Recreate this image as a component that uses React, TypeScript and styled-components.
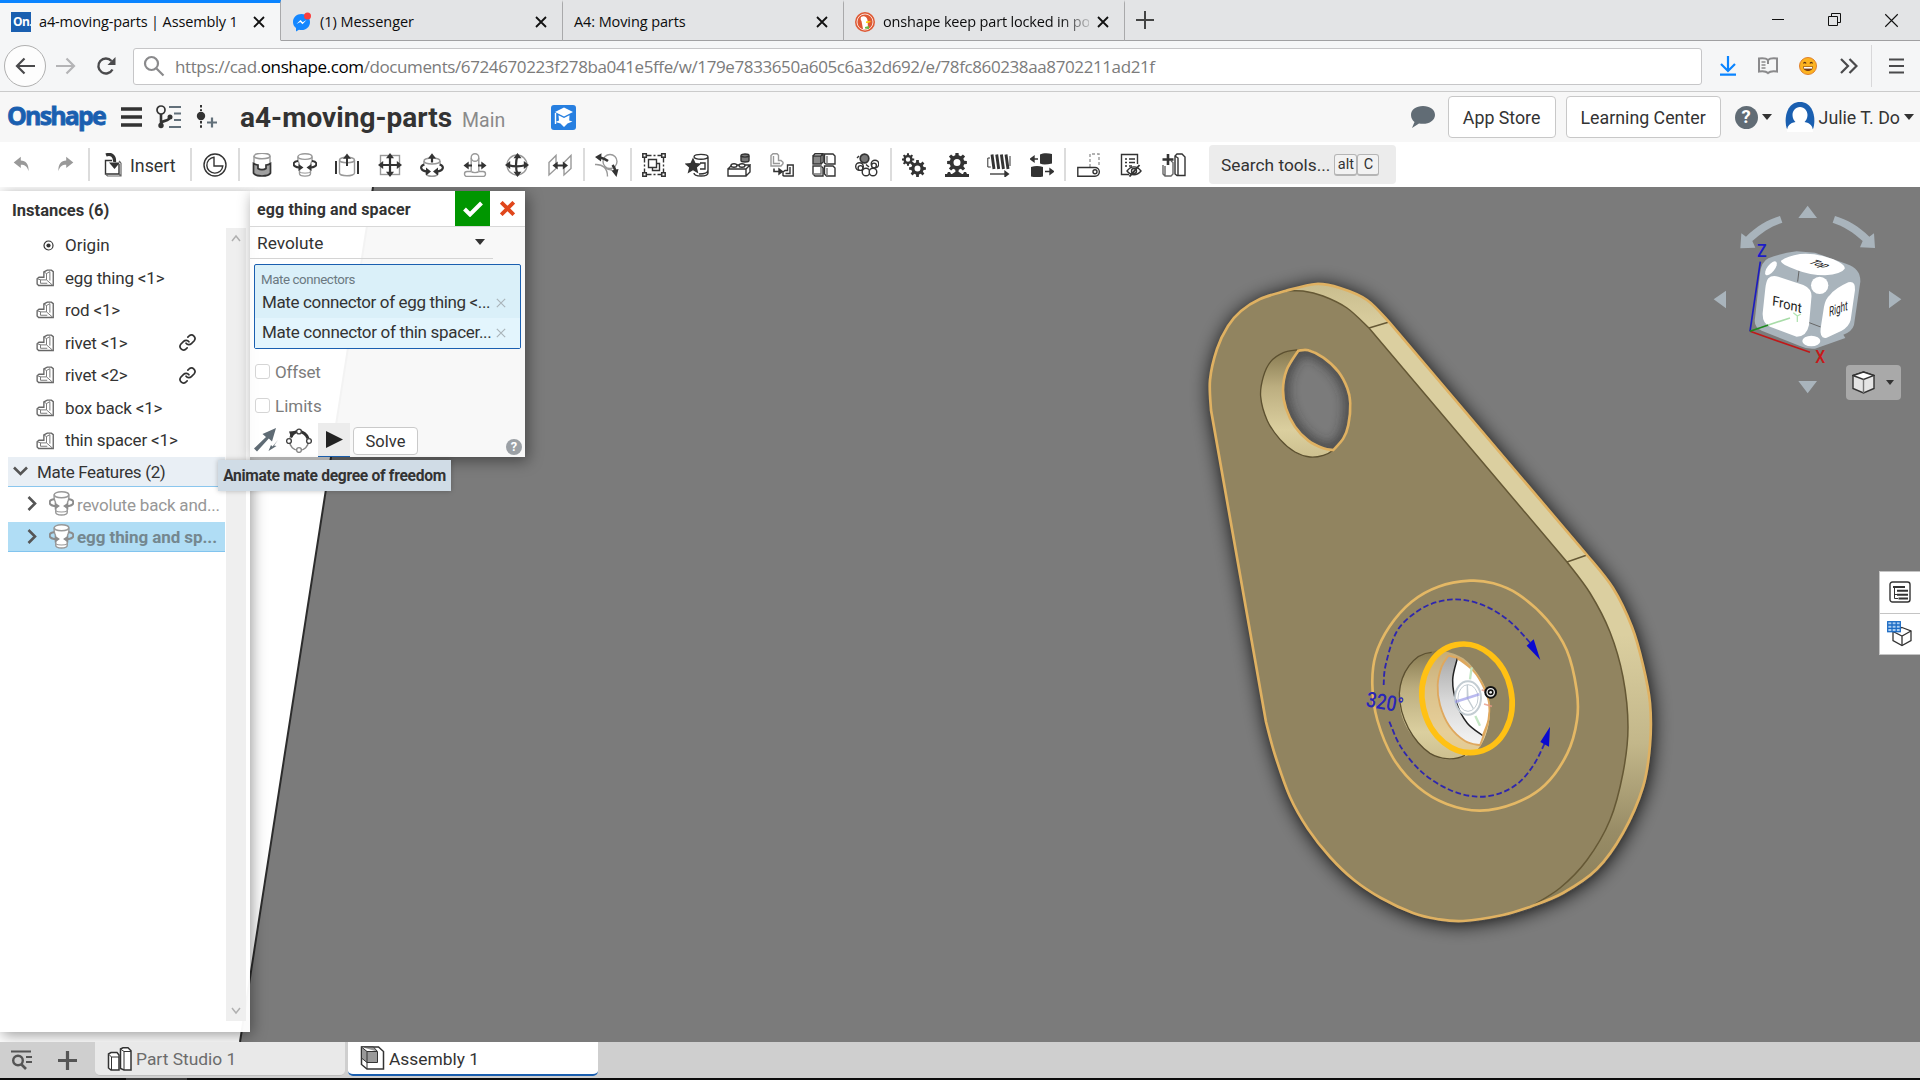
import React from "react";
import styled, { createGlobalStyle } from "styled-components";

const UI = `Roboto, "Liberation Sans", sans-serif`;
const CHROME = `"Open Sans", "Noto Sans", sans-serif`;
const INK = "#333333";
const BLUE = "#1a5fb0";

const Global = createGlobalStyle`
  * { box-sizing: border-box; }
  body { margin: 0; background: #7b7b7b; overflow: hidden; }
`;

const Page = styled.div`
  width: 1920px;
  height: 1080px;
  display: flex;
  flex-direction: column;
  font-family: ${UI};
  color: ${INK};
  overflow: hidden;
`;

const Label = styled.span<{ $size?: number; $ls?: number; $bold?: boolean; $color?: string; $drop?: number }>`
  font-size: ${(p) => p.$size ?? 17}px;
  letter-spacing: ${(p) => p.$ls ?? 0}px;
  font-weight: ${(p) => (p.$bold ? 700 : 400)};
  color: ${(p) => p.$color ?? "inherit"};
  padding-top: ${(p) => (p.$drop ?? 0) * 2}px;
  white-space: nowrap;
  line-height: 1.2;
`;

/* ---------- browser chrome ---------- */

const TabStrip = styled.div`
  height: 41px;
  flex: none;
  display: flex;
  background: #e3e4e6;
  font-family: ${CHROME};
  color: #0c0c0d;
`;

const BrowserTab = styled.div<{ $active?: boolean; $w: number }>`
  width: ${(p) => p.$w}px;
  height: 41px;
  display: flex;
  align-items: center;
  gap: 8px;
  padding: 1px 15px 0 11px;
  border-right: 1px solid #a9a9ab;
  background: ${(p) => (p.$active ? "#f5f6f7" : "transparent")};
  border-top: 3px solid ${(p) => (p.$active ? "#0a84ff" : "transparent")};
  border-bottom: 1px solid ${(p) => (p.$active ? "#f5f6f7" : "#a0a0a2")};
`;

const TabTitle = styled(Label)<{ $fade?: boolean }>`
  flex: 1;
  min-width: 0;
  ${(p) => p.$fade && "mask-image: linear-gradient(to right, #000 86%, transparent 103%);"}
`;

const TabRest = styled.div`
  flex: 1;
  display: flex;
  align-items: center;
  justify-content: space-between;
  padding: 0 21px 0 11px;
  border-bottom: 1px solid #a0a0a2;
`;

const WindowButtons = styled.div`
  display: flex;
  gap: 43px;
`;

const Favicon = styled.div`
  width: 20px;
  height: 20px;
  background: ${BLUE};
  color: #fff;
  font: 700 12px/20px ${CHROME};
  letter-spacing: -0.6px;
  padding-left: 2px;
  overflow: hidden;
`;

const NavBar = styled.div`
  height: 51px;
  flex: none;
  display: flex;
  align-items: center;
  background: #f5f6f7;
  border-bottom: 1px solid #cbcbcb;
  padding: 0 12px 0 4px;
`;

const BackButton = styled.div`
  width: 42px;
  height: 42px;
  border-radius: 50%;
  border: 1px solid #b0b0b0;
  background: #fdfdfd;
  display: grid;
  place-items: center;
`;

const NavIcon = styled.div<{ $w: number }>`
  width: ${(p) => p.$w}px;
  display: grid;
  place-items: center;
`;

const UrlBox = styled.div`
  flex: none;
  width: 1569px;
  height: 37px;
  margin-left: 5px;
  border: 1px solid #c6c6c8;
  border-radius: 3px;
  background: #fff;
  display: flex;
  align-items: center;
  padding-left: 9px;
  gap: 10px;
  font-family: ${CHROME};
  color: #7b7b7b;
  b { font-weight: 400; color: #000; }
`;

const NavRule = styled.div`
  width: 1px;
  height: 42px;
  background: #d8d8da;
`;

/* ---------- document header ---------- */

const Header = styled.div`
  height: 50px;
  flex: none;
  display: flex;
  align-items: center;
  background: #f7f7f7;
  padding-left: 7px;
`;

const Logo = styled.div`
  width: 114px;
  font: 700 25px/30px ${CHROME};
  letter-spacing: -1.85px;
  color: ${BLUE};
  -webkit-text-stroke: 0.8px ${BLUE};
  padding-bottom: 4px;
`;

const HeaderTools = styled.div`
  display: flex;
  align-items: center;
  gap: 14px;
  width: 119px;
`;

const BranchName = styled(Label)`
  margin: 8px 46px 0 10px;
`;

const HeaderRight = styled.div`
  margin-left: auto;
  display: flex;
  align-items: center;
  padding-right: 6px;
`;

const HeaderButton = styled.div<{ $w: number }>`
  width: ${(p) => p.$w}px;
  height: 42px;
  border: 1px solid #c8c8c8;
  border-radius: 4px;
  background: #fff;
  display: grid;
  place-items: center;
  margin-right: 10px;
`;

const Caret = styled.i<{ $s?: number }>`
  display: block;
  border: ${(p) => p.$s ?? 5}px solid transparent;
  border-top: ${(p) => (p.$s ?? 5) + 1}px solid ${INK};
  border-bottom: 0;
`;

const HelpDot = styled.div<{ $d: number; $bg: string }>`
  width: ${(p) => p.$d}px;
  height: ${(p) => p.$d}px;
  border-radius: 50%;
  background: ${(p) => p.$bg};
  color: #fff;
  display: grid;
  place-items: center;
  font: 700 ${(p) => p.$d * 0.8}px/1 ${UI};
`;

/* ---------- toolbar ---------- */

const Toolbar = styled.div`
  height: 45px;
  flex: none;
  display: flex;
  align-items: center;
  background: #fff;
`;

const Tool = styled.div<{ $w?: number }>`
  width: ${(p) => p.$w ?? 42.5}px;
  height: 30px;
  flex: none;
  display: grid;
  place-items: center;
`;

const InsertTool = styled.div`
  width: 100px;
  display: flex;
  align-items: center;
  gap: 7px;
  padding-left: 14px;
`;

const Divider = styled.div`
  width: 2px;
  height: 33px;
  flex: none;
  background: #dcdcdc;
`;

const Gap = styled.div<{ $w: number }>`
  width: ${(p) => p.$w}px;
  flex: none;
`;

const SearchTools = styled.div`
  width: 187px;
  height: 39px;
  margin-left: 12.5px;
  border-radius: 4px;
  background: #ececec;
  display: flex;
  align-items: center;
  padding-left: 12px;
`;

const Key = styled.span<{ $w: number }>`
  width: ${(p) => p.$w}px;
  height: 22px;
  border: 1px solid #b5b5b5;
  border-bottom-width: 2px;
  border-radius: 3px;
  background: #f2f2f2;
  font-size: 14.5px;
  line-height: 19px;
  text-align: center;
`;

/* ---------- stage ---------- */

const Stage = styled.div`
  position: relative;
  height: 855px;
  flex: none;
  display: flex;
  align-items: flex-start;
  padding-top: 4px;
  overflow: hidden;
`;

const Scene = styled.svg`
  position: absolute;
  inset: 0;
  width: 1920px;
  height: 855px;
`;

const Panel = styled.div`
  position: relative;
  width: 250px;
  height: 841px;
  background: rgba(255, 255, 255, 0.97);
  box-shadow: 2px 3px 14px rgba(0, 0, 0, 0.4);
  display: flex;
  flex-direction: column;
`;

const PanelTitle = styled.div`
  height: 37px;
  padding: 10px 0 0 12px;
`;

const PanelBody = styled.div`
  height: 793px;
  display: flex;
`;

const Tree = styled.div`
  width: 226px;
  padding: 1px 1px 0 8px;
`;

const TreeRow = styled.div`
  height: 32.55px;
  display: flex;
  align-items: center;
  padding: 0 29px 0 28px;
`;

const RowIcon = styled.div`
  width: 29px;
  display: flex;
  justify-content: flex-start;
`;

const OriginMark = styled.svg`
  margin-left: 7px;
`;

const Spacer = styled.div`
  flex: 1;
`;

const GroupRow = styled.div`
  height: 30px;
  display: flex;
  align-items: center;
  gap: 9px;
  padding-left: 5px;
  background: #e9eff5;
  border-bottom: 1px solid #8ac6ee;
`;

const MateRow = styled.div<{ $on?: boolean }>`
  height: 30px;
  margin: 2.5px 0 0;
  display: flex;
  align-items: center;
  padding-left: 19px;
  background: ${(p) => (p.$on ? "#b0ddf5" : "transparent")};
  border-bottom: 1px solid ${(p) => (p.$on ? "#82c4ee" : "transparent")};
`;

const Track = styled.div`
  width: 20px;
  background: #efefef;
  display: flex;
  flex-direction: column;
  justify-content: space-between;
  align-items: center;
  padding: 6px 0;
`;

const Dialog = styled.div`
  position: relative;
  width: 275px;
  height: 266px;
  background: rgba(255, 255, 255, 0.945);
  box-shadow: 3px 4px 14px rgba(0, 0, 0, 0.42);
  display: flex;
  flex-direction: column;
`;

const DialogHead = styled.div`
  height: 36px;
  display: flex;
  align-items: center;
  background: #fff;
  border-bottom: 1px solid #d8d8d8;
  padding-left: 7px;
`;

const Accept = styled.div`
  width: 35px;
  height: 35px;
  margin-left: auto;
  background: #009600;
  display: grid;
  place-items: center;
`;

const Reject = styled.div`
  width: 35px;
  display: grid;
  place-items: center;
`;

const SelectRow = styled.div`
  width: 243px;
  height: 32px;
  display: flex;
  align-items: center;
  justify-content: space-between;
  padding: 0 8px 0 7px;
  border-bottom: 1px solid #d4d4d4;
`;

const Connectors = styled.div`
  margin: 5px 4px 0;
  height: 85px;
  border: 1.5px solid ${BLUE};
  border-radius: 2px;
  background: #daf0f9;
  display: flex;
  flex-direction: column;
`;

const ConnectorLabel = styled.div`
  height: 23px;
  padding: 6px 0 0 6px;
  line-height: 1;
`;

const ConnectorRow = styled.div<{ $light?: boolean }>`
  height: 30px;
  display: flex;
  align-items: center;
  justify-content: space-between;
  padding: 0 14px 0 7px;
  background: ${(p) => (p.$light ? "#e3f5fd" : "transparent")};
`;

const CheckRow = styled.div`
  height: 34.5px;
  display: flex;
  align-items: center;
  gap: 5px;
  padding-left: 5px;
  color: #7c7c7c;
`;

const Checkbox = styled.span`
  width: 15px;
  height: 15px;
  border: 1px solid #d5d5d5;
  border-radius: 3px;
  background: #fff;
`;

const ActionRow = styled.div`
  display: flex;
  height: 34px;
  align-items: center;
  padding-left: 4px;
`;

const PlayButton = styled.div`
  width: 32px;
  height: 34px;
  margin-left: 6px;
  background: #ececec;
  border-bottom: 1.5px solid ${BLUE};
  display: grid;
  place-items: center;
`;

const SolveButton = styled.div`
  width: 65px;
  height: 28px;
  margin: 2px 0 0 3px;
  border: 1px solid #cacaca;
  border-radius: 4px;
  background: #fff;
  display: grid;
  place-items: center;
`;

const HelpSlot = styled.div`
  margin: 14px 3px 0 auto;
`;

const Tooltip = styled.div`
  position: absolute;
  left: 218px;
  top: 273px;
  width: 233px;
  height: 31px;
  background: #d0dce6;
  box-shadow: 0 0 5px rgba(0, 0, 0, 0.25);
  display: grid;
  place-items: center;
  padding-top: 2px;
`;

const ViewMenu = styled.div`
  position: absolute;
  left: 1846px;
  top: 178px;
  width: 55px;
  height: 35px;
  border-radius: 4px;
  background: #a9a9a9;
  display: flex;
  align-items: center;
  gap: 11px;
  padding-left: 6px;
`;

const SideTabs = styled.div`
  position: absolute;
  right: 0;
  top: 384px;
  width: 41px;
  height: 84px;
  display: flex;
  flex-direction: column;
  background: #fff;
  border: 1px solid #c4c4c4;
  border-right: 0;
`;

const SideTab = styled.div`
  flex: 1;
  display: grid;
  place-items: center;
  & + & { border-top: 1px solid #c4c4c4; }
`;

/* ---------- bottom tabs ---------- */

const BottomBar = styled.div`
  height: 36px;
  flex: none;
  display: flex;
  background: #cfcfcf;
`;

const BottomTool = styled.div<{ $w: number; $nudge?: number }>`
  width: ${(p) => p.$w}px;
  padding-right: ${(p) => p.$nudge ?? 0}px;
  display: grid;
  place-items: center;
`;

const DocTab = styled.div<{ $on?: boolean }>`
  width: 250px;
  height: 34px;
  margin-right: 3px;
  display: flex;
  align-items: center;
  gap: 4px;
  padding: 0 0 0 12px;
  border-radius: 0 0 5px 5px;
  color: ${(p) => (p.$on ? INK : "#6c6c6c")};
  background: ${(p) => (p.$on ? "#fff" : "#e9e9e9")};
  border-bottom: ${(p) => (p.$on ? `2px solid ${BLUE}` : "1px solid #bdbdbd")};
`;

const Taskbar = styled.div`
  height: 2px;
  flex: none;
  background: linear-gradient(to right, #0c0c0c 126px, #3a3a3a 126px 187px, #0c0c0c 187px);
`;

/* ---------- icons ---------- */

const Ico = ({ s = 24, w = 24, h = 24, children }: { s?: number; w?: number; h?: number; children: React.ReactNode }) => (
  <svg width={(s * w) / 24} height={(s * h) / 24} viewBox={`0 0 ${w} ${h}`} fill="none" stroke={INK} strokeWidth="1.4" display="block">
    {children}
  </svg>
);

const Cross = ({ d = 12, c = "#111", sw = 1.8 }: { d?: number; c?: string; sw?: number }) => (
  <svg width={d} height={d} viewBox="0 0 12 12" fill="none" stroke={c} strokeWidth={sw} display="block">
    <path d="M1 1 11 11M11 1 1 11" />
  </svg>
);

const GRAY = "#999";

const Cylinder = ({ x = 6, y = 1, w = 12, h = 21, c = GRAY }: { x?: number; y?: number; w?: number; h?: number; c?: string }) => (
  <g stroke={c}>
    <ellipse cx={x + w / 2} cy={y + 3} rx={w / 2} ry={2.8} fill="#fff" />
    <path d={`M${x} ${y + 3}V${y + h - 3}a${w / 2} 2.8 0 0 0 ${w} 0V${y + 3}`} />
  </g>
);

const Head = ({ x, y, r = 0 }: { x: number; y: number; r?: number }) => (
  <path d="M0 -4 4 1.200H-4Z" fill={INK} stroke="none" transform={`translate(${x} ${y}) rotate(${r})`} />
);

const gearPath = (cx: number, cy: number, r: number, teeth = 8) => {
  const out: string[] = [];
  for (let i = 0; i < teeth; i++) {
    const a = (i / teeth) * Math.PI * 2;
    const step = (Math.PI * 2) / teeth;
    [
      [-0.3, 0.74],
      [-0.2, 1],
      [0.2, 1],
      [0.3, 0.74],
    ].forEach(([o, k]) => {
      out.push(`${(cx + Math.cos(a + o * step) * r * k).toFixed(2)} ${(cy + Math.sin(a + o * step) * r * k).toFixed(2)}`);
    });
  }
  return `M${out.join("L")}Z`;
};

const Gear = ({ cx, cy, r, t = 8 }: { cx: number; cy: number; r: number; t?: number }) => (
  <path
    d={`${gearPath(cx, cy, r, t)}M${cx + r * 0.35} ${cy}a${r * 0.35} ${r * 0.35} 0 1 0 ${-r * 0.7} 0a${r * 0.35} ${r * 0.35} 0 1 0 ${r * 0.7} 0Z`}
    fill={INK}
    fillRule="evenodd"
    stroke="none"
  />
);

const UndoIcon = ({ flip }: { flip?: boolean }) => (
  <Ico s={17}>
    <path
      transform={flip ? "translate(24 0) scale(-1 1)" : undefined}
      d="M1 9 11 1v5.500c7 0 11.500 5 11 15C20 15 17 12.500 11 12.500V17Z"
      fill="#999"
      stroke="none"
    />
  </Ico>
);

const InsertIcon = () => (
  <Ico w={19} h={24}>
    <path d="M8 7.500H1.500V21H15V11" />
    <path d="M17 10v13H3.500l-2-2M15 21l2 2M15 8l2 2" strokeWidth="1.200" stroke="#666" />
    <path d="M2 2C7 0 11 3 10.500 9" strokeWidth="3.200" />
    <path d="M5 9.500H16L10.500 16Z" fill={INK} stroke="none" />
  </Ico>
);

const MateIcon = () => (
  <Ico>
    <circle cx="12" cy="12" r="11" />
    <path d="M11 4.200A8 8 0 1 0 19.800 13H11Z" />
  </Ico>
);

const FastenedIcon = () => (
  <Ico>
    <Cylinder x={4} y={0} w={16} h={22} />
    <path d="M3.500 10.500c1.500 1 3 1.500 4.500 1.500v3.500c2 1.500 6 1.500 8 0V12c2 0 3-.5 4.500-1.500V20c-2 4-15 4-17 0Z" fill="#a0a0a0" strokeWidth="1.700" />
  </Ico>
);

const RevoluteIcon = ({ c = INK, s = 24 }: { c?: string; s?: number }) => (
  <Ico s={s}>
    <path d="M5 3.400C5 6 4.500 7 5.500 9 6.500 10.500 6.500 12 6.500 14v6.500c0 3.500 11 3.500 11 0V14c0-2 0-3.500 1-5 1-2 .5-3 .5-5.600" stroke={GRAY} fill="#fff" />
    <ellipse cx="12" cy="3.600" rx="7" ry="2.800" stroke={GRAY} fill="#fff" />
    <path d="M5 8C-.5 8.500-1.500 13.500 6 14.500M19 8c5.500.5 6.500 5.500-1 6.500" stroke={c} strokeWidth="2" />
    <path d="M5.500 11 10.500 14.500 5.500 18ZM18.500 11 13.500 14.500 18.500 18Z" fill={c} stroke="none" />
    <path d="M6.500 19c2 1.500 9 1.500 11 0" stroke={GRAY} strokeWidth="1" />
  </Ico>
);

const SliderIcon = () => (
  <Ico>
    <Cylinder x={4.500} y={4} w={15} h={19} />
    <path d="M1 8v13M23 8v13" strokeWidth="2" />
    <path d="M12 4v9" strokeWidth="2" />
    <Head x={12} y={4.500} />
  </Ico>
);

const PlanarIcon = () => (
  <Ico>
    <rect x="2.500" y="2.500" width="19" height="19" stroke={GRAY} />
    <path d="M12 3v18M3 12h18" strokeWidth="2.200" />
    <Head x={12} y={4} />
    <Head x={12} y={20} r={180} />
    <Head x={4} y={12} r={-90} />
    <Head x={20} y={12} r={90} />
  </Ico>
);

const CylindricalIcon = () => (
  <Ico>
    <ellipse cx="12" cy="8" rx="8" ry="3" stroke={GRAY} />
    <path d="M4 8v5M20 8v5M6 17v4c2 3 10 3 12 0v-4" stroke={GRAY} />
    <path d="M4 11.500c-5 2-3 6.500 3 7M20 11.500c5 2 3 6.500-3 7" strokeWidth="2.200" />
    <path d="M6 14.500 11 18.500 6 22.500ZM18 14.500 13 18.500 18 22.500Z" fill={INK} stroke="none" />
    <path d="M12 3v6.500" strokeWidth="2.200" />
    <Head x={12} y={4.300} />
  </Ico>
);

const PinSlotIcon = () => (
  <Ico>
    <g stroke={GRAY}>
      <circle cx="12" cy="4.500" r="3.800" />
      <path d="M8.200 5v13.500M15.800 5v13.500M8 18.500H4a2.400 2.400 0 0 0 0 5h16a2.400 2.400 0 0 0 0-5h-4" />
      <path d="M8.200 18.500c1 1.500 6.600 1.500 7.600 0" />
    </g>
    <path d="M4 12.500h5M15 12.500h5" strokeWidth="2" />
    <Head x={4.500} y={12.500} r={-90} />
    <Head x={19.500} y={12.500} r={90} />
  </Ico>
);

const BallIcon = () => (
  <Ico>
    <circle cx="12" cy="12" r="10" stroke={GRAY} />
    <path d="M12.500 3c-2 5-2 13 0 18M3 12c5 1.500 13 1.500 18 0" strokeWidth="2.200" />
    <Head x={12.500} y={4} />
    <Head x={12.500} y={20} r={180} />
    <Head x={4} y={12} r={-90} />
    <Head x={20} y={12} r={90} />
  </Ico>
);

const ParallelIcon = () => (
  <Ico>
    <path d="M1 9.500 8 2.500v13L1 22ZM16 9.500l7-7v13L16 22Z" stroke={GRAY} />
    <path d="M8 12.500h9" strokeWidth="2" />
    <Head x={8.500} y={12.500} r={-90} />
    <Head x={16} y={12.500} r={90} />
  </Ico>
);

const TangentIcon = () => (
  <Ico>
    <g stroke={GRAY}>
      <circle cx="15" cy="8.500" r="7" />
      <path d="M0 11.500c8-.5 12.500 4 12.500 12" />
      <path d="M8.500 13.500c3 2.500 5 3.500 8.500 3.500" />
    </g>
    <path d="M5 4.500c4 .8 6 2 8 3.500M17.500 12c1.700 2 2.500 4 3 6" strokeWidth="2.600" />
    <path d="M0 4 6.500.300 6 8.500ZM16.500 17.500l7-1.500-2 8Z" fill={INK} stroke="none" />
  </Ico>
);

const GroupIcon = () => (
  <Ico>
    <path d="M5 2.500h14M5 21.500h14M2.500 5v14M21.500 5v14" strokeDasharray="4.500 2 2 2" />
    <path d="M.8.8h3.500v3.500H.8ZM19.700.8h3.500v3.500h-3.500ZM.8 19.700h3.500v3.500H.8ZM19.700 19.700h3.500v3.500h-3.500Z" fill="#fff" strokeWidth="1.500" />
    <path d="M6.500 6.500h8v8h-8ZM10.500 14.500v3h7v-7h-3" />
  </Ico>
);

const FavoriteIcon = () => (
  <Ico>
    <path d="M9 4c0-3.500 14-3.500 14 0v16c0 4-14 4-14 0M9 4c1 3 13 3 14 0M14 21c5 0 9-1 9-4M15 10h5v6h-5" />
    <path d="m8 4.500 2.500 5.500 6 .5-4.600 4 1.500 6-5.400-3.200L2.600 20.500l1.500-6L-.5 10.500l6-.5Z" fill={INK} stroke="none" />
  </Ico>
);

const ReplicateIcon = () => (
  <Ico>
    <path d="M1 16h18v7H1ZM1 16l4-4h18l-4 4M23 12v7l-4 4" />
    <ellipse cx="7" cy="12.500" rx="3" ry="1.800" fill="#fff" />
    <ellipse cx="15" cy="12.500" rx="3" ry="1.800" fill="#fff" />
    <path d="M14 2.500c0-2 8-2 8 0v5c0 2-8 2-8 0Z" fill="#777" />
    <path d="M14 3c1 1.500 7 1.500 8 0" />
  </Ico>
);

const MirrorIcon = () => (
  <Ico>
    <path d="M1 13V2.500L3 .8h4l1.500 1.500V7.500H11l2 1.800v1.500L11 13Z" stroke={GRAY} />
    <path d="M3.500 3v7.500H10" stroke={GRAY} />
    <path d="M13 22.500V19l2-1.500h2.500V12h5.700v11H14ZM15.500 20.500H20V14" />
    <path d="M4 15.500v3h5" strokeWidth="1.600" />
    <Head x={9.500} y={18.500} r={90} />
  </Ico>
);

const PatternIcon = () => (
  <Ico>
    <rect x="1" y="3" width="8" height="8" fill="#888" />
    <path d="M1 3l2-2.200h8V9l-2 2M9 3l2-2.200M12.500 1H21l2 2v8h-9l-1.500-1ZM1 13h8l2 2v8H3l-2-2ZM12.500 13H21l2 2v8h-8.500l-2-2Z" />
    <path d="M15 3v8M15 15v8M9 13v8H1" stroke="#777" />
  </Ico>
);

const CircularPatternIcon = () => (
  <Ico>
    <circle cx="9.500" cy="5.500" r="4.300" fill="#777" strokeWidth="1.700" />
    <g fill="#fff">
      <circle cx="4.500" cy="13.500" r="3.800" />
      <circle cx="20" cy="11" r="3.800" />
      <circle cx="11" cy="19" r="3.800" />
      <circle cx="18" cy="19" r="3.800" />
      <circle cx="5.500" cy="15" r="2.400" />
      <circle cx="19" cy="12.500" r="2.400" />
    </g>
    <path d="M11 11.500l3 2.500M2 5l2-2" />
  </Ico>
);

const GearsIcon = () => (
  <Ico>
    <Gear cx={6} cy={6.500} r={6.300} />
    <Gear cx={15.500} cy={15.500} r={8.500} />
  </Ico>
);

const RackIcon = () => (
  <Ico>
    <Gear cx={12} cy={9.500} r={10} />
    <path d="M0 24v-3h2l1-2h2l1 2h1l3-2h4l3 2h1l1-2h2l1 2h2v3Z" fill={INK} stroke="none" />
  </Ico>
);

const ScrewIcon = () => (
  <Ico>
    <path d="M5 1.500 7 16M9.700 1.500 11.700 16M14.400 1.500 16.400 16M19 1.500 21 16" strokeWidth="2.900" />
    <path d="M3 5H.8v9h3M23 3v10" strokeWidth="1" />
    <path d="M3 21h15" strokeWidth="1.300" />
    <Head x={18.500} y={21} r={90} />
  </Ico>
);

const LinearRelIcon = () => (
  <Ico>
    <path d="M10 1.500c3-1.500 8-1.500 12-.5v9.500c-5 1-9 1.500-12 0ZM1 14c4-1.500 8-1.500 12 0v9.500c-4 1-8 1-12 0Z" fill={INK} stroke="none" />
    <path d="M3 6h5M15 18.500h5" />
    <Head x={3.500} y={6} r={-90} />
    <Head x={20.500} y={18.500} r={90} />
  </Ico>
);

const PositionIcon = () => (
  <Ico>
    <path d="M13 14V1h9v13" stroke={GRAY} strokeDasharray="3 2" />
    <path d="M.8 14.500H18a4.300 4.300 0 0 1 0 8.700H.8Z" />
    <circle cx="18" cy="18.800" r="2" />
  </Ico>
);

const DisplayIcon = () => (
  <Ico>
    <path d="M10 21.500H2.500V1.500h16V11M6 6h2M10 6h6M6 9.500h2M10 9.500h6M6 13h2M10 13h3" />
    <path d="M8 18c4-5.500 10-5.500 14 0-4 5-10 5-14 0Z" fill="#fff" />
    <circle cx="15" cy="18" r="2.500" />
    <path d="M20.500 12 10.500 23.500" strokeWidth="1.900" />
  </Ico>
);

const ExplodeIcon = () => (
  <Ico>
    <path d="M1 12v9l2 2h6l2-2V9.500L9 8M3 13v10" stroke="#666" />
    <path d="M13 3l2-2h5l3 3v18.500h-8L13 21ZM13 3l3 2v17" />
    <path d="M6 1v11M.5 6.500h11" strokeWidth="2.600" />
  </Ico>
);

const PartIcon = () => (
  <Ico s={18}>
    <path d="M1.500 13 4 11h6.500V4L15 1.500h5.500l2.500 2v18.500H3.500l-2-2Z" stroke="#666" strokeWidth="1.800" />
    <path d="M10.500 4l3.500 2 4.500-2.500M14 6v8.500H6.500L1.500 13M14 14.500l8 7M18.500 3.500V15.500M6 14.500v4.500h9" stroke="#777" strokeWidth="1.300" />
  </Ico>
);

const OriginIcon = () => (
  <OriginMark width="11" height="11" viewBox="0 0 11 11">
    <circle cx="5.500" cy="5.500" r="4.500" fill="none" stroke={INK} strokeWidth="1.200" />
    <circle cx="5.500" cy="5.500" r="2.100" fill={INK} />
  </OriginMark>
);

const LinkIcon = () => (
  <svg width="17" height="17" viewBox="0 0 24 24" fill="none" stroke={INK} strokeWidth="2.400" strokeLinecap="round">
    <path d="M10 13a5 5 0 0 0 7.500.5l4-4a5 5 0 0 0-7-7l-2 2" />
    <path d="M14 11a5 5 0 0 0-7.500-.5l-4 4a5 5 0 0 0 7 7l2-2" />
  </svg>
);

const Chevron = ({ dir }: { dir: "down" | "right" }) => (
  <svg width={dir === "down" ? 15 : 10} height={dir === "down" ? 10 : 15} viewBox={dir === "down" ? "0 0 15 10" : "0 0 10 15"} fill="none" stroke="#555" strokeWidth="2.600">
    <path d={dir === "down" ? "M1 1.500 7.500 8 14 1.500" : "M1.500 1 8 7.500 1.500 14"} />
  </svg>
);

const ScrollArrow = ({ up }: { up?: boolean }) => (
  <svg width="10" height="8" viewBox="0 0 10 8" fill="none" stroke="#b0b0b0" strokeWidth="1.500">
    <path d={up ? "M1 7 5 2l4 5" : "M1 1l4 5 4-5"} />
  </svg>
);

/* ---------- 3D scene ---------- */

type P = [number, number];

/* Smooth curve through the points, as cubic segments without the initial move. */
const curve = (p: P[]) =>
  p
    .slice(1)
    .map((b, i) => {
      const a = p[i];
      const before = p[i - 1] ?? a;
      const after = p[i + 2] ?? b;
      return `C${a[0] + (b[0] - before[0]) / 6} ${a[1] + (b[1] - before[1]) / 6} ${b[0] - (after[0] - a[0]) / 6} ${b[1] - (after[1] - a[1]) / 6} ${b[0]} ${b[1]}`;
    })
    .join("");

const line = (p: P[]) => `M${p[0].join(" ")}${curve(p)}`;

const ring = (p: P[]) => {
  const n = p.length;
  const loop = [p[n - 1], ...p, p[0], p[1]];
  let d = `M${p[0].join(" ")}`;
  for (let i = 1; i <= n; i++) {
    const [o, a, b, c] = [loop[i - 1], loop[i], loop[i + 1], loop[i + 2] ?? p[1]];
    d += `C${a[0] + (b[0] - o[0]) / 6} ${a[1] + (b[1] - o[1]) / 6} ${b[0] - (c[0] - a[0]) / 6} ${b[1] - (c[1] - a[1]) / 6} ${b[0]} ${b[1]}`;
  }
  return d + "Z";
};

const leftArc: P[] = [[1211, 410], [1210, 380], [1217, 349], [1228, 326], [1241, 311], [1260, 299], [1285, 291]];
const lowerArc: P[] = [[1266, 722], [1275, 755], [1290, 797], [1308, 829], [1330, 857], [1354, 880], [1381, 898], [1413, 913], [1437, 919], [1463, 921], [1503, 915], [1530, 907]];
const outerRight: P[] = [[1530, 907], [1563, 893], [1597, 869], [1623, 833], [1643, 787], [1650, 745], [1650, 703], [1643, 665], [1632, 627], [1613, 588], [1587, 555]];
const outerTop: P[] = [[1389, 322], [1367, 300], [1340, 288], [1316, 284], [1285, 291]];
const innerRight: P[] = [[1530, 907], [1560, 888], [1587, 860], [1610, 820], [1623, 773], [1628, 727], [1623, 677], [1610, 632], [1590, 593], [1567, 562]];
const innerTop: P[] = [[1369, 328], [1347, 308], [1323, 296], [1303, 291], [1285, 291]];

const leftBase = `${line(leftArc.slice().reverse())}L1266 722${curve(lowerArc)}`;
const silhouette = `${leftBase}${curve(outerRight)}L1389 322${curve(outerTop)}Z`;
const face = `${leftBase}${curve(innerRight)}L1369 328${curve(innerTop)}Z`;
const faceEdge = `${line(innerRight)}L1369 328${curve(innerTop)}`;

/* Hole outlines are kept at three times the scene scale. */
const topRim = ring([[350, 270], [385, 270], [430, 293], [475, 335], [502, 385], [512, 430], [505, 495], [490, 535], [460, 570], [430, 586], [390, 591], [345, 576], [300, 538], [262, 482], [242, 410], [250, 350], [272, 305], [310, 278]]);
const topOpening = `${line([[355, 272], [385, 271], [430, 293], [475, 335], [502, 385], [511, 430], [505, 495], [490, 535], [460, 570]])}${curve([[460, 570], [430, 565], [385, 542], [345, 500], [318, 445], [309, 390], [320, 330], [355, 272]])}Z`;

const lowRim = ring([[340, 273], [400, 295], [445, 345], [472, 400], [480, 460], [465, 530], [430, 578], [355, 598], [300, 580], [245, 525], [215, 465], [208, 400], [225, 340], [260, 297], [300, 276]]);
const lowOpening = `${line([[355, 287], [395, 300], [440, 345], [465, 390], [477, 440], [473, 490], [450, 556]])}${curve([[450, 556], [405, 543], [358, 498], [330, 435], [323, 375], [335, 320], [355, 287]])}Z`;
const whiteBeyond = `${line([[382, 295], [430, 333], [460, 380], [476, 430], [474, 480], [458, 527]])}${curve([[458, 527], [412, 490], [380, 430], [368, 360], [382, 295]])}Z`;
const bigCircle = ring([[420, 62], [325, 80], [245, 125], [178, 200], [137, 285], [127, 375], [142, 480], [190, 595], [265, 682], [350, 732], [450, 752], [555, 730], [645, 675], [712, 580], [741, 480], [740, 390], [710, 270], [650, 178], [565, 103], [490, 70]]);

const ViewCube = () => (
  <g transform="translate(1700 190) scale(.33333)">
    <g fill="#a9b4bc">
      <path d="M323 47 351 84H295ZM323 610 295 573H351ZM41 328 78 302V355ZM604 328 567 302V355Z" />
      <path d="M240 78 247 98C215 108 185 127 157 153L166 173 121 175 124 130 138 140C168 110 205 88 240 78Z" />
      <path d="M405 78 398 98C430 108 460 127 488 153L480 172 525 174 522 130 508 140C478 110 440 88 405 78Z" />
      <path d="M205 205Q240 190 290 184L345 188 440 222Q482 235 481 275L462 405Q456 425 430 434L436 444 345 476Q320 478 300 468L185 422Q160 410 165 385L180 250Q184 215 205 205Z" />
    </g>
    <path d="M297 242 293 275M325 397 362 411" stroke="#666" strokeWidth="3" />
    <g fill="#fff">
      <path d="M243 212Q262 198 300 192 350 188 400 208 438 225 434 236 425 252 375 256 330 256 290 240 240 222 243 212Z" />
      <path d="M205 265Q215 255 235 260L310 285Q338 297 334 325L327 405Q320 440 290 440L210 410Q187 400 188 370L196 295Q198 275 205 265Z" />
      <path d="M390 315Q405 295 445 277 467 272 465 300L452 390Q447 410 425 422L380 443Q358 448 362 415L372 350Q377 325 390 315Z" />
      <circle cx="359" cy="286" r="26" />
      <ellipse cx="334" cy="453" rx="27" ry="16" />
      <ellipse cx="213" cy="235" rx="11" ry="25" transform="rotate(38 213 235)" />
    </g>
    <g fontFamily={UI} fill="#222">
      <text transform="matrix(1 .26 -.08 1.050 216 346)" fontSize="39" textLength="88" lengthAdjust="spacingAndGlyphs">Front</text>
      <text transform="matrix(1 -.36 -.02 1.250 387 380)" fontSize="33" textLength="56" lengthAdjust="spacingAndGlyphs">Right</text>
      <text transform="matrix(1 .3 -1.100 .4 322 219)" fontSize="34" textLength="50" lengthAdjust="spacingAndGlyphs" fontWeight="500">Top</text>
    </g>
    <g strokeWidth="5" fill="none">
      <path d="M150 424 181 215" stroke="#1c1cc0" />
      <path d="M150 424 330 487" stroke="#c01818" />
      <path d="M150 424 205 405" stroke="#1d8a1d" />
      <path d="M205 405 270 384" stroke="#a8dca8" />
      <path d="M280 368 292 378 303 372M292 378V396" stroke="#b4e4b4" strokeWidth="4" />
    </g>
    <g fontFamily={UI} fontSize="54" fontWeight="500">
      <text x="171" y="200" fill="#1c1cc8" textLength="29" lengthAdjust="spacingAndGlyphs">Z</text>
      <text x="346" y="518" fill="#c81818" textLength="30" lengthAdjust="spacingAndGlyphs">X</text>
    </g>
  </g>
);

const SceneView = () => (
  <Scene viewBox="0 187 1920 855">
    <defs>
      <filter id="soft" x="-20%" y="-20%" width="140%" height="140%">
        <feGaussianBlur stdDeviation="10" />
      </filter>
      <filter id="rim" x="-20%" y="-20%" width="140%" height="140%">
        <feGaussianBlur stdDeviation="18" />
      </filter>
      <linearGradient id="side" x1="0" y1="0" x2="0" y2="1">
        <stop offset="0" stopColor="#c9bd8e" />
        <stop offset=".07" stopColor="#dbcfa0" />
        <stop offset=".55" stopColor="#dbcfa0" />
        <stop offset=".72" stopColor="#c3b78a" />
        <stop offset=".86" stopColor="#988c66" />
        <stop offset="1" stopColor="#857a56" />
      </linearGradient>
      <linearGradient id="wall" x1="0" y1="0" x2="0" y2="1">
        <stop offset="0" stopColor="#85784f" />
        <stop offset=".35" stopColor="#bcae80" />
        <stop offset=".75" stopColor="#dbcf9f" />
        <stop offset="1" stopColor="#cdc08f" />
      </linearGradient>
      <linearGradient id="steel" x1="0" y1="0" x2="0" y2="1">
        <stop offset="0" stopColor="#a8a8a8" />
        <stop offset=".5" stopColor="#d8d8d8" />
        <stop offset="1" stopColor="#f4f4f4" />
      </linearGradient>
      <clipPath id="openTop"><path d={topOpening} /></clipPath>
      <clipPath id="holeLow"><path d={lowRim} /></clipPath>
    </defs>
    <rect y="187" width="1920" height="855" fill="#7b7b7b" />
    <path d="M0 187H373L240 1042H0Z" fill="#fff" />
    <path d="M373 187 240 1042" stroke="#2c2c2c" strokeWidth="2" />

    <path d={silhouette} fill="#111" filter="url(#soft)" transform="translate(1 2)" />
    <path d={silhouette} fill="url(#side)" />
    <path d={face} fill="#918460" />
    <path d={faceEdge} fill="none" stroke="#655835" strokeWidth="1.500" />
    <path d="M1369 328 1389 322M1567 562 1587 555" stroke="#655835" strokeWidth="1.400" />
    <path d={silhouette} fill="none" stroke="#dfb162" strokeWidth="2.700" />

    <g transform="translate(1180 260) scale(.33333)" fill="none">
      <path d={topRim} fill="url(#wall)" stroke="#5c5030" strokeWidth="4" />
      <path d={topOpening} fill="#7b7b7b" />
      <g clipPath="url(#openTop)">
        <path d={topOpening} stroke="#2a2a2a" strokeWidth="30" filter="url(#rim)" opacity=".75" />
      </g>
      <path d={topOpening} stroke="#dfb162" strokeWidth="8" />
    </g>

    <g transform="translate(1330 560) scale(.33333)" fill="none">
      <path d={bigCircle} stroke="#e4b865" strokeWidth="8" />
      <path d={lowRim} fill="url(#wall)" />
      <g clipPath="url(#holeLow)">
        <ellipse cx="410" cy="414" rx="130" ry="160" transform="rotate(-13 410 414)" fill="#efcf95" opacity=".6" />
      </g>
      <path d="M405 586C370 603 330 598 300 580C250 545 208 475 208 400C212 340 250 280 305 277" stroke="#5c5030" strokeWidth="4" />
      <path d={lowOpening} fill="url(#steel)" stroke="#dfa85e" strokeWidth="5.500" />
      <path d={whiteBeyond} fill="#fff" />
      <path d={line([[382, 295], [368, 360], [380, 430], [412, 490], [458, 527]])} stroke="#222" strokeWidth="4.500" />
      <path d={line([[382, 295], [430, 333], [460, 380], [477, 430], [475, 480], [458, 527]])} stroke="#dfa85e" strokeWidth="5" />
      <g stroke="#c3ccd2" strokeWidth="6">
        <ellipse cx="414" cy="414" rx="39" ry="50" />
        <ellipse cx="414" cy="414" rx="30" ry="40" strokeWidth="3" />
        <path d="M412 378v36l18 32M414 414l-2-40" strokeWidth="4" />
      </g>
      <path d="M375 426 448 403" stroke="#9d9de8" strokeWidth="8" opacity=".7" />
      <path d="M425 322 420 358M436 468 450 497" stroke="#c4e6c4" strokeWidth="7" />
      <path d="M455 389 466 394M462 432 486 439" stroke="#e79a86" strokeWidth="5" opacity=".8" />
      <ellipse cx="411" cy="415" rx="134" ry="164" transform="rotate(-12 411 415)" stroke="#ffc114" strokeWidth="17" />
      <circle cx="482" cy="397" r="19" fill="#111" />
      <circle cx="482" cy="397" r="11" stroke="#eee" strokeWidth="4" />
      <circle cx="482" cy="397" r="4" fill="#eee" />
      <g stroke="#2e26ae" strokeWidth="5.500">
        <path strokeDasharray="17 8" d={line([[161, 375], [167, 315], [200, 215], [260, 155], [325, 125], [395, 119], [470, 140], [540, 185], [602, 250]])} />
        <path strokeDasharray="17 8" d={line([[178, 485], [215, 565], [280, 640], [360, 690], [440, 710], [510, 700], [570, 665], [615, 608], [646, 545]])} />
      </g>
      <path d="M590 257 611 238 631 300ZM631 546 657 560 660 500Z" fill="#0a0ad0" />
      <text transform="translate(106 439) rotate(10)" fontFamily={UI} fontSize="64" fontWeight="500" fill="#2a26b8" textLength="112" lengthAdjust="spacingAndGlyphs">320°</text>
    </g>
    <ViewCube />
  </Scene>
);

/* ---------- data ---------- */

const toolGroups: React.ComponentType[][] = [
  [MateIcon],
  [FastenedIcon, RevoluteIcon, SliderIcon, PlanarIcon, CylindricalIcon, PinSlotIcon, BallIcon, ParallelIcon],
  [TangentIcon],
  [GroupIcon, FavoriteIcon, ReplicateIcon, MirrorIcon, PatternIcon, CircularPatternIcon],
  [GearsIcon, RackIcon, ScrewIcon, LinearRelIcon],
  [PositionIcon, DisplayIcon, ExplodeIcon],
];

const instances = [
  { name: "egg thing <1>" },
  { name: "rod <1>" },
  { name: "rivet <1>", linked: true },
  { name: "rivet <2>", linked: true },
  { name: "box back <1>" },
  { name: "thin spacer <1>" },
];

export default function App() {
  return (
    <Page>
      <Global />
      <TabStrip>
        <BrowserTab $active $w={281}>
          <Favicon>On.</Favicon>
          <TabTitle $size={14.5} $ls={-0.13}>a4-moving-parts | Assembly 1</TabTitle>
          <Cross />
        </BrowserTab>
        <BrowserTab $w={282}>
          <svg width="20" height="20" viewBox="0 0 20 20">
            <path d="M9.500 2C4.500 2 1 5.500 1 10c0 2.500 1 4.500 3 6v3.500l3-1.700c6 1.400 11-2.300 11-7.800C18 5.500 14.500 2 9.500 2Z" fill="#1487ff" />
            <path d="m4.500 12 4-4 2.200 2.200L14.500 8l-4 4.200L8.300 10Z" fill="#fff" />
            <circle cx="15.500" cy="4" r="3.500" fill="#fa3e3e" />
          </svg>
          <TabTitle $size={14.5} $ls={-0.05}>(1) Messenger</TabTitle>
          <Cross />
        </BrowserTab>
        <BrowserTab $w={281}>
          <TabTitle $size={14.5} $ls={-0.1}>A4: Moving parts</TabTitle>
          <Cross />
        </BrowserTab>
        <BrowserTab $w={281}>
          <svg width="20" height="20" viewBox="0 0 20 20">
            <circle cx="10" cy="10" r="10" fill="#de5833" />
            <circle cx="10" cy="10" r="8" fill="none" stroke="#fff" strokeWidth=".8" />
            <path d="M6 5c3-2 6 0 6.500 3l.5 8c-2 1.500-4 1.500-5 1L6.500 9C5.500 8 5.500 6.500 6 5Z" fill="#fff" />
            <path d="M11 9.500c2-.8 4-.6 5 0-1 1-3 1.600-5 1.500Z" fill="#fdd20a" />
            <path d="m10 15 4-1v3l-4-.5Z" fill="#65bc46" />
          </svg>
          <TabTitle $size={14.5} $ls={-0.17} $fade>onshape keep part locked in po</TabTitle>
          <Cross />
        </BrowserTab>
        <TabRest>
          <svg width="18" height="18" viewBox="0 0 18 18" stroke="#444" strokeWidth="2"><path d="M9 0v18M0 9h18" /></svg>
          <WindowButtons>
            <svg width="14" height="14" viewBox="0 0 14 14" stroke="#111"><path d="M1 6.500h12" /></svg>
            <svg width="13" height="13" viewBox="0 0 13 13" stroke="#111" fill="none"><path d="M.5 3.500h9v9h-9ZM3.500 3.500v-3h9v9h-3" /></svg>
            <Cross d={15} sw={0.9} />
          </WindowButtons>
        </TabRest>
      </TabStrip>

      <NavBar>
        <BackButton>
          <svg width="20" height="18" viewBox="0 0 20 18" fill="none" stroke="#4a4a4c" strokeWidth="2.200"><path d="M20 9H2M9.500 1.500 2 9l7.500 7.500" /></svg>
        </BackButton>
        <NavIcon $w={40}>
          <svg width="20" height="18" viewBox="0 0 20 18" fill="none" stroke="#b4b4b6" strokeWidth="2.200"><path d="M0 9h18M10.500 1.500 18 9l-7.500 7.500" /></svg>
        </NavIcon>
        <NavIcon $w={40}>
          <svg width="20" height="20" viewBox="0 0 20 20" fill="none" stroke="#4a4a4c" strokeWidth="2.400">
            <path d="M16.500 13.500A7.500 7.500 0 1 1 15.500 5" />
            <path d="M19.500 1v8h-8Z" fill="#4a4a4c" stroke="none" />
          </svg>
        </NavIcon>
        <Gap $w={2} />
        <UrlBox>
          <svg width="22" height="22" viewBox="0 0 22 22" fill="none" stroke="#8a8a8c" strokeWidth="2.200"><circle cx="8.500" cy="8.500" r="6.500" /><path d="m13.500 13.500 7 7" /></svg>
          <Label $size={17} $ls={-0.39} $drop={1.5}>
            https://cad.<b>onshape.com</b>/documents/6724670223f278ba041e5ffe/w/179e7833650a605c6a32d692/e/78fc860238aa8702211ad21f
          </Label>
        </UrlBox>
        <NavIcon $w={52}>
          <svg width="16" height="20" viewBox="0 0 16 20" fill="none" stroke="#0a84ff" strokeWidth="2.200"><path d="M8 0v14M1 8l7 7 7-7M0 18.700h16" /></svg>
        </NavIcon>
        <NavIcon $w={28}>
          <svg width="20" height="18" viewBox="0 0 20 18" fill="none" stroke="#8a8a8c" strokeWidth="2">
            <path d="M10 3C8 1 5 1 1 1.500v13c3-.5 7-.5 9 1.500 2-2 6-2 9-1.500v-13C15 1 12 1 10 3ZM10 3v4" />
            <path d="M3.500 5h4M3.500 8h4M3.500 11h4" strokeWidth="1.500" />
          </svg>
        </NavIcon>
        <NavIcon $w={52}>
          <svg width="18" height="18" viewBox="0 0 18 18">
            <circle cx="9" cy="9" r="8.500" fill="#fcb320" stroke="#e0802a" />
            <path d="M4 9.500h10c0 6-10 6-10 0Z" fill="#7a3d10" />
            <path d="M4.800 10h8.400v1.600H4.800Z" fill="#fff" />
            <path d="M4.500 6.500c.5-1.500 2-1.500 2.500 0M11 6.500c.5-1.500 2-1.500 2.500 0" stroke="#5a3010" fill="none" strokeWidth="1.200" />
          </svg>
        </NavIcon>
        <NavIcon $w={30}>
          <svg width="18" height="16" viewBox="0 0 18 16" fill="none" stroke="#4a4a4c" strokeWidth="2.200"><path d="m1 1 7 7-7 7M9.500 1l7 7-7 7" /></svg>
        </NavIcon>
        <Gap $w={7} />
        <NavRule />
        <Spacer />
        <NavIcon $w={15}>
          <svg width="15" height="16" viewBox="0 0 15 16" stroke="#4a4a4c" strokeWidth="2"><path d="M0 1.500h15M0 8h15M0 14.500h15" /></svg>
        </NavIcon>
        <Gap $w={4} />
      </NavBar>

      <Header>
        <Logo>Onshape</Logo>
        <HeaderTools>
          <svg width="21" height="20" viewBox="0 0 21 20" stroke={INK} strokeWidth="3.600"><path d="M0 2h21M0 10h21M0 18h21" /></svg>
          <svg width="26" height="24" viewBox="0 0 26 24" fill="none" stroke={INK} strokeWidth="2">
            <circle cx="5" cy="5" r="4" strokeWidth="1.700" />
            <path d="M5 9v10M5 19c0-5 9-1 9-8" strokeWidth="2.600" />
            <circle cx="5" cy="20.500" r="2.700" fill={INK} stroke="none" />
            <circle cx="14" cy="12" r="2.500" fill={INK} stroke="none" />
            <path d="M13 2h12M18 8.500h7M18 15h7M13 22h12" stroke="#62707a" />
          </svg>
          <svg width="22" height="24" viewBox="0 0 22 24" fill="none" stroke={INK} strokeWidth="2">
            <circle cx="5" cy="11" r="4.200" fill={INK} stroke="none" />
            <path d="M5 0v6M5 16v8" strokeDasharray="2.500 1.700" />
            <path d="M16 12.500v10M11 17.500h10" stroke="#62707a" strokeWidth="2.200" />
          </svg>
        </HeaderTools>
        <Label $size={28} $bold $ls={0.02} $drop={1}>a4-moving-parts</Label>
        <BranchName $size={19.5} $color="#8a8a8a">Main</BranchName>
        <svg width="25" height="25" viewBox="0 0 25 25">
          <rect width="25" height="25" rx="3" fill="#277fe0" />
          <path d="M13 2.500 22 7l-9 4.500L4 7Z" fill="#fff" />
          <path d="M7.500 10.300 13 13l5.500-2.700-.3 5.200 3.300 1-5 2-3.500 3.500-3.500-3.500-5-1.500 3.500-1.500Z" fill="#fff" />
          <path d="M4.500 8v11" stroke="#fff" strokeWidth="1.400" />
        </svg>
        <HeaderRight>
          <svg width="26" height="24" viewBox="0 0 26 24">
            <path d="M13 1C6 1 1 4.500 1 10c0 3 1.500 5.500 3.500 7L2 23l7-4.500C18 20 25 16 25 10 25 4.500 20 1 13 1Z" fill="#616c75" />
          </svg>
          <Gap $w={12} />
          <HeaderButton $w={108}><Label $size={17.8} $drop={0.5}>App Store</Label></HeaderButton>
          <HeaderButton $w={155}><Label $size={17.8} $drop={0.5}>Learning Center</Label></HeaderButton>
          <Gap $w={4} />
          <HelpDot $d={23} $bg="#616c75">?</HelpDot>
          <Gap $w={4} />
          <Caret />
          <Gap $w={13} />
          <svg width="30" height="30" viewBox="0 0 30 30">
            <path d="M2 27C-1 20 0 0 15 0s16 20 13 27l-6 2H8Z" fill={BLUE} />
            <path d="M15 5c-4.500 0-7.500 4-7.500 8 0 3.500 1.500 5.500 3 7C5 21 2 23.500 2 30h26c0-6.500-3-9-8.500-10 1.500-1.500 3-3.500 3-7 0-4-3-8-7.500-8Z" fill="#fff" />
          </svg>
          <Gap $w={4} />
          <Label $size={17.8} $drop={0.5}>Julie T. Do</Label>
          <Gap $w={4} />
          <Caret />
        </HeaderRight>
      </Header>

      <Toolbar>
        <Tool $w={43.5}><UndoIcon /></Tool>
        <Tool $w={44.5}><UndoIcon flip /></Tool>
        <Divider />
        <InsertTool>
          <InsertIcon />
          <Label $size={17.8} $drop={1}>Insert</Label>
        </InsertTool>
        {toolGroups.map((group, i) => (
          <React.Fragment key={i}>
            <Divider />
            <Gap $w={i === 0 ? 2 : 1.1} />
            {group.map((Icon, k) => (
              <Tool key={k}><Icon /></Tool>
            ))}
            <Gap $w={1.6} />
          </React.Fragment>
        ))}
        <SearchTools>
          <Label $size={17.3} $drop={0.5}>Search tools...</Label>
          <Gap $w={4} />
          <Key $w={23}>alt</Key>
          <Key $w={22}>C</Key>
        </SearchTools>
      </Toolbar>

      <Stage>
        <SceneView />
        <Panel>
          <PanelTitle><Label $size={16.5} $bold>Instances (6)</Label></PanelTitle>
          <PanelBody>
            <Tree>
              <TreeRow>
                <RowIcon><OriginIcon /></RowIcon>
                <Label>Origin</Label>
              </TreeRow>
              {instances.map((it) => (
                <TreeRow key={it.name}>
                  <RowIcon><PartIcon /></RowIcon>
                  <Label $ls={-0.17}>{it.name}</Label>
                  <Spacer />
                  {it.linked && <LinkIcon />}
                </TreeRow>
              ))}
              <GroupRow>
                <Chevron dir="down" />
                <Label $ls={-0.34} $drop={1}>Mate Features (2)</Label>
              </GroupRow>
              <MateRow>
                <Chevron dir="right" />
                <Gap $w={12} />
                <RevoluteIcon c="#8c8c8c" s={25} />
                <Gap $w={3} />
                <Label $color="#979797" $ls={-0.2} $drop={1}>revolute back and...</Label>
              </MateRow>
              <MateRow $on>
                <Chevron dir="right" />
                <Gap $w={12} />
                <RevoluteIcon c="#8c8c8c" s={25} />
                <Gap $w={3} />
                <Label $bold $color="#74878f" $ls={-0.08} $drop={1}>egg thing and sp...</Label>
              </MateRow>
            </Tree>
            <Track>
              <ScrollArrow up />
              <ScrollArrow />
            </Track>
          </PanelBody>
        </Panel>

        <Dialog>
          <DialogHead>
            <Label $size={16} $bold $ls={0.15} $drop={1}>egg thing and spacer</Label>
            <Accept>
              <svg width="20" height="16" viewBox="0 0 20 16" fill="none" stroke="#fff" strokeWidth="4"><path d="m1.500 8 5.500 5.500L18.500 2" /></svg>
            </Accept>
            <Reject><Cross d={15} c="#e0471c" sw={3} /></Reject>
          </DialogHead>
          <SelectRow>
            <Label $size={17.3} $drop={1}>Revolute</Label>
            <Caret />
          </SelectRow>
          <Connectors>
            <ConnectorLabel><Label $size={13.3} $ls={-0.4} $color="#6b7981">Mate connectors</Label></ConnectorLabel>
            <ConnectorRow>
              <Label $ls={-0.36}>Mate connector of egg thing &lt;...</Label>
              <Cross d={10} c="#aab4ba" sw={1.4} />
            </ConnectorRow>
            <ConnectorRow $light>
              <Label $ls={-0.31}>Mate connector of thin spacer...</Label>
              <Cross d={10} c="#aab4ba" sw={1.4} />
            </ConnectorRow>
          </Connectors>
          <Gap $w={1} style={{ height: 6 }} />
          <CheckRow><Checkbox /><Label $ls={-0.2}>Offset</Label></CheckRow>
          <CheckRow><Checkbox /><Label>Limits</Label></CheckRow>
          <ActionRow>
            <svg width="26" height="24" viewBox="0 0 26 24" fill="#5f6b74">
              <path d="M0 20.500 12 9 8.500 6 22 0 18 13.500l-3.200-3L3 23.500ZM24 12l-4 5.500 2.500.5-8 5 2.500-6 1.500 1.500Z" />
            </svg>
            <Gap $w={6} />
            <svg width="26" height="25" viewBox="0 0 26 25" fill="none" stroke="#888" strokeWidth="1.400">
              <circle cx="13" cy="13" r="9.500" />
              <path d="M5 9C7 4 10 3.300 13 3.500s7 2 9 7" stroke={INK} strokeWidth="3" />
              <path d="M3 3.500 9.500 3 5.500 10.500Z" fill={INK} stroke="none" />
              <g fill="#fff" stroke="#444">
                <circle cx="13" cy="3.500" r="2.400" /><circle cx="3" cy="13" r="2.400" /><circle cx="23" cy="13" r="2.400" /><circle cx="13" cy="22" r="2.400" stroke="#888" />
              </g>
            </svg>
            <PlayButton>
              <svg width="17" height="17" viewBox="0 0 17 17"><path d="M0 0 17 8.500 0 17Z" fill="#222" /></svg>
            </PlayButton>
            <SolveButton><Label $size={16.5} $drop={1}>Solve</Label></SolveButton>
            <HelpSlot><HelpDot $d={16} $bg="#9ba0a5">?</HelpDot></HelpSlot>
          </ActionRow>
        </Dialog>

        <Tooltip><Label $size={15.6} $ls={-0.3} $bold>Animate mate degree of freedom</Label></Tooltip>

        <ViewMenu>
          <svg width="23" height="23" viewBox="0 0 23 23" stroke={INK} strokeWidth="1.400">
            <path d="M11.500 1 22 4.500V17.500l-10.500 4.500L1 17.500V4.500Z" fill="#e4e4e4" />
            <path d="M1 4.500 11.500 8.500 22 4.500 11.500 1Z" fill="#fff" />
            <path d="M11.500 8.500V22" stroke="#777" />
          </svg>
          <Caret $s={4.5} />
        </ViewMenu>

        <SideTabs>
          <SideTab>
            <svg width="22" height="22" viewBox="0 0 22 22" fill="none" stroke={INK} strokeWidth="1.400">
              <rect x="1" y="1" width="20" height="20" rx="2.500" />
              <path d="M4 6h12M8 9.700h11M8 13.700h11M9.500 17.500H19" strokeWidth="2.100" />
              <path d="M5.500 6v11.500H9M5.500 13.500H8" strokeWidth="1" />
            </svg>
          </SideTab>
          <SideTab>
            <svg width="26" height="26" viewBox="0 0 26 26" fill="none" stroke={INK} strokeWidth="1.300">
              <path d="M15 6.500 24 10v9.500l-9 5-9-5V10Z" fill="#fff" />
              <path d="m6 10.500 9 4.500 9-5M15 15v9.500" />
              <rect x=".7" y=".7" width="12.600" height="10" fill="#a9cdf2" stroke="#1d6cc4" />
              <path d="M1 4h12M1 7.300h12M5 1v10M9.200 1v10" stroke="#1d6cc4" />
            </svg>
          </SideTab>
        </SideTabs>
      </Stage>

      <BottomBar>
        <BottomTool $w={42}>
          <svg width="21" height="20" viewBox="0 0 21 20" fill="none" stroke="#555" strokeWidth="2">
            <path d="M0 1.500h20M15 7h6M15 12h6" /><circle cx="7" cy="10.500" r="4.800" strokeWidth="2.400" /><path d="m10 14 5 5" strokeWidth="2.600" />
          </svg>
        </BottomTool>
        <BottomTool $w={53} $nudge={3}>
          <svg width="19" height="19" viewBox="0 0 19 19" stroke="#555" strokeWidth="3.200"><path d="M9.500 0v19M0 9.500h19" /></svg>
        </BottomTool>
        <DocTab>
          <svg width="25" height="24" viewBox="0 0 25 24" fill="#fff" stroke={INK} strokeWidth="1.500">
            <path d="M1.500 7 4 5.500h6l2 2.500v15H4l-2.500-2Z" /><path d="M1.500 7 4.500 10H12M4.500 10v13" strokeWidth="1" />
            <path d="M13.500 2 16 .8h5l3 3V23h-7l-3.500-1.500Z" /><path d="M13.500 2 17 4.500h7M17 4.500V23" strokeWidth="1" />
          </svg>
          <Label $size={17.4} $drop={1}>Part Studio 1</Label>
        </DocTab>
        <DocTab $on>
          <svg width="25" height="24" viewBox="0 0 25 24" fill="#fff" stroke={INK} strokeWidth="1.500">
            <path d="M1.500 1h17l5 4.500V23H7l-5.500-4.500Z" />
            <path d="M1.500 1h12l4 4.500v11H7L1.500 12Z" fill="#999" strokeWidth="1" /><path d="M1.500 1 7 5.500h10M7 5.500V23" strokeWidth="1" />
          </svg>
          <Label $size={17.4} $drop={1}>Assembly 1</Label>
        </DocTab>
      </BottomBar>
      <Taskbar />
    </Page>
  );
}
